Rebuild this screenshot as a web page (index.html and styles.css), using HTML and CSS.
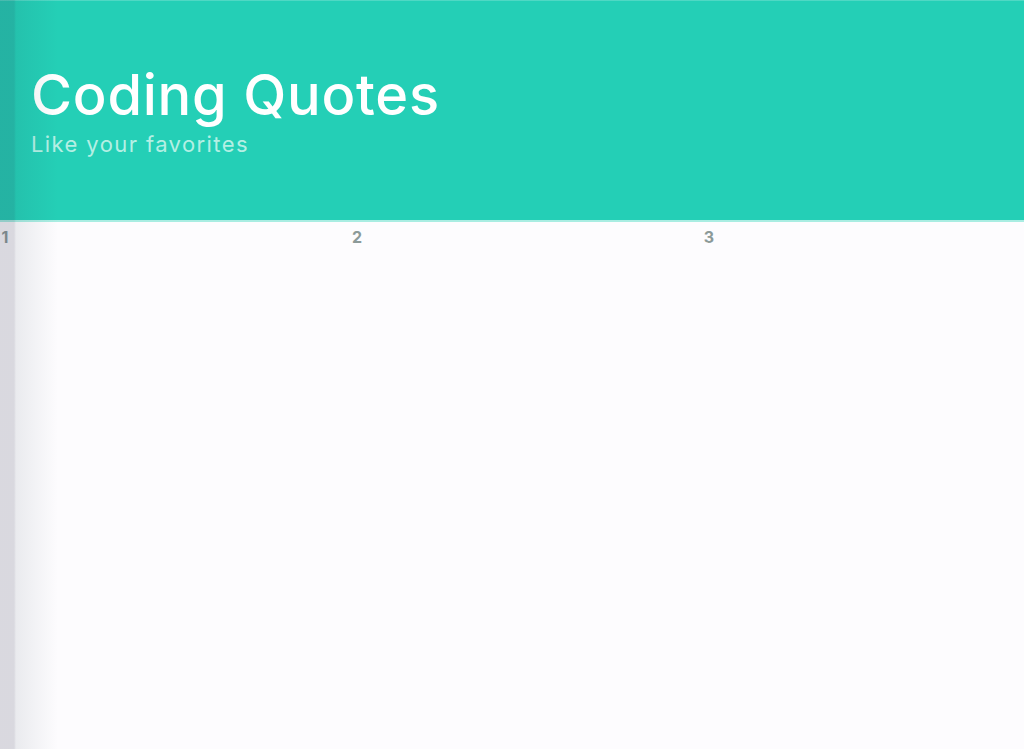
FILE: index.html
```html
<!DOCTYPE html>
<html>
<head>
<meta charset="utf-8">
<link rel="stylesheet" href="styles.css">
</head>
<body>
<div class="page">
  <header class="hero">
    <h1 class="title">Coding Quotes</h1>
    <p class="subtitle">Like your favorites</p>
  </header>
  <main class="content">
    <div class="track">
      <div class="slide">1</div>
      <div class="slide">2</div>
      <div class="slide">3</div>
    </div>
  </main>
  <div class="edge-shadow"></div>
</div>
</body>
</html>
```
FILE: styles.css
```css
html, body {
  margin: 0;
  padding: 0;
  height: 100%;
  overflow: hidden;
  background: #fdfcfe;
  font-family: Inter, "Noto Sans", sans-serif;
}
.page {
  position: relative;
  height: 749px;
  display: flex;
  flex-direction: column;
}
.hero {
  height: 155px;
  background: #24cfb6;
  border-top: 1px solid #4fd8c4;
  border-bottom: 2px solid #a9ede2;
  box-sizing: content-box;
  padding: 64px 0 0 31px;
  display: flex;
  flex-direction: column;
}
.title {
  margin: 0;
  font-size: 56px;
  font-weight: 500;
  line-height: 60px;
  color: #ffffff;
  letter-spacing: 0.75px;
}
.subtitle {
  margin: 7px 0 0;
  font-size: 22px;
  line-height: 24px;
  color: #b4efe4;
  letter-spacing: 1.4px;
}
.content {
  flex: 1;
  overflow: hidden;
}
.track {
  display: flex;
  margin-left: -171px;
  padding-top: 5px;
}
.slide {
  flex: 0 0 352px;
  text-align: center;
  font-size: 16px;
  font-weight: 700;
  line-height: 20px;
  color: #8c9a99;
}
.edge-shadow {
  position: absolute;
  left: 0;
  top: 0;
  bottom: 0;
  width: 60px;
  background: linear-gradient(to right, rgba(40,40,70,0.17) 0, rgba(40,40,70,0.17) 14px, rgba(40,60,80,0.09) 16px, rgba(40,60,80,0) 58px);
  pointer-events: none;
}
```
